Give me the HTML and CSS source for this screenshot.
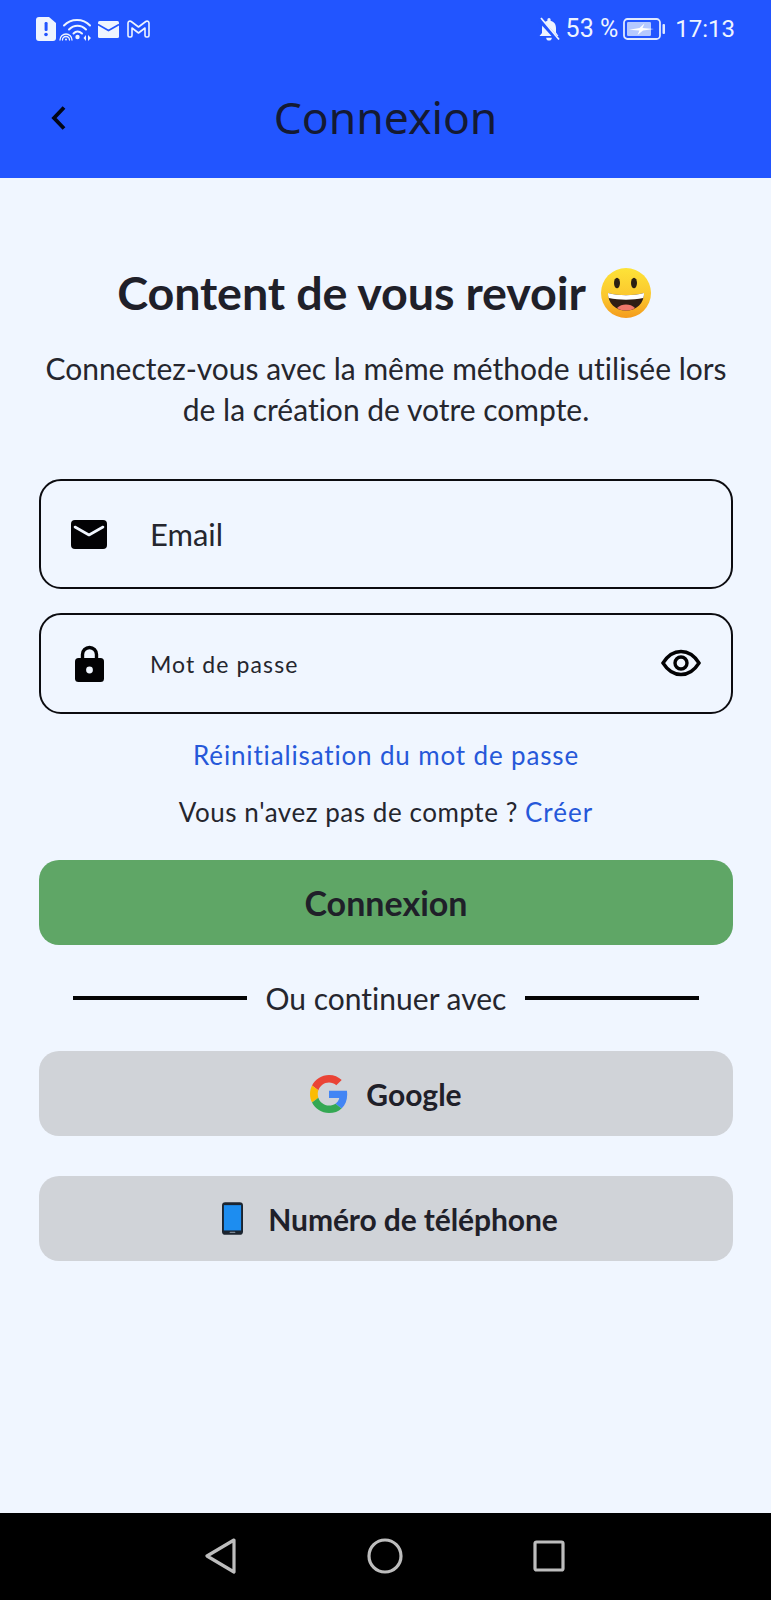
FILE: index.html
```html
<!DOCTYPE html>
<html lang="fr">
<head>
<meta charset="utf-8">
<title>Connexion</title>
<link rel="stylesheet" href="styles.css">
</head>
<body>
<div class="app">
  <header class="top">
    <div class="status">
      <div class="status-left">
        <svg class="i-sim" viewBox="0 0 20 24"><path d="M3 0h10l7 6v15a3 3 0 0 1-3 3H3a3 3 0 0 1-3-3V3a3 3 0 0 1 3-3z" fill="#eef4ff"/><rect x="8.600" y="5" width="3" height="9" rx="1.200" fill="#2255ff"/><circle cx="10" cy="17.500" r="1.800" fill="#2255ff"/></svg>
        <svg class="i-wifi" viewBox="0 0 33 24" fill="none" stroke="#eef4ff" stroke-linecap="round"><path d="M5 8.500C12 1 24 1 31 8.500" stroke-width="2"/><path d="M10 12.500C15 7.500 22 7.500 27 12.500" stroke-width="2"/><path d="M14.500 16.500C17 14 20 14 23 16.500" stroke-width="2"/><circle cx="18.500" cy="20" r="2.200" fill="#eef4ff" stroke="none"/><path d="M1 23a6 6 0 0 1 12 0" stroke-width="1.300"/><path d="M3.500 23a3.500 3.500 0 0 1 7 0" stroke-width="1.300"/><circle cx="7" cy="22.500" r="1" fill="#eef4ff" stroke="none"/><path d="M27 18l-2.500 3 2.500 3zM29 18l3 3-3 3z" fill="#eef4ff" stroke="none"/></svg>
        <svg class="i-mail" viewBox="0 0 21 17"><rect width="21" height="17" rx="1.500" fill="#eef4ff"/><path d="M0 3.500l10.500 6 10.500-6" fill="none" stroke="#2255ff" stroke-width="1.600"/></svg>
        <svg class="i-m" viewBox="0 0 23 18" fill="none" stroke="#eef4ff" stroke-width="1.600" stroke-linejoin="round"><path d="M1 3a2 2 0 0 1 3.200-1.500L11.500 7l7.300-5.500A2 2 0 0 1 22 3v12.500a1.500 1.500 0 0 1-1.500 1.500h-1a1.500 1.500 0 0 1-1.500-1.500V8l-6.500 5L5 8v7.500A1.500 1.500 0 0 1 3.500 17h-1A1.500 1.500 0 0 1 1 15.500z"/></svg>
      </div>
      <div class="status-right">
        <svg class="i-bell" viewBox="0 0 22 24"><path d="M11 1a1.600 1.600 0 0 1 1.600 1.600v1.100c3.400.8 5.400 3.700 5.400 7.300v4.500l2.500 3.500H1.500L4 16v-4.500C4 7.700 6.200 4.600 9.400 3.700V2.600A1.600 1.600 0 0 1 11 1z" fill="#eef4ff"/><path d="M8.200 20.800h5.600a2.800 2.800 0 0 1-5.600 0z" fill="#eef4ff"/><path d="M1.500 2.500l18 20" stroke="#2255ff" stroke-width="4.200"/><path d="M3 1l18 21.500" stroke="#eef4ff" stroke-width="1.800"/></svg>
        <span class="pct">53 %</span>
        <svg class="i-batt" viewBox="0 0 42 22"><rect x="1" y="1" width="36" height="20" rx="3.500" fill="none" stroke="#dfe9ff" stroke-width="1.800"/><rect x="4" y="4" width="24" height="14" rx="1.200" fill="#b5c9ff"/><path d="M6 11.800l10.500-1.800 5-4.500-2 4.500 11.500 1-11 1.600-5.500 4.400 2-4.400z" fill="#fff"/><rect x="39.500" y="6" width="2.500" height="10" rx="1" fill="#dfe9ff"/></svg>
        <span class="time">17:13</span>
      </div>
    </div>
    <div class="bar">
      <svg class="back" viewBox="0 0 18 26" fill="none" stroke="#020617" stroke-width="3.800"><path d="M14 2.500L4 13l10 10.500"/></svg>
      <h1 class="bar-title">Connexion</h1>
    </div>
  </header>

  <main class="content">
    <h2 class="welcome">Content de vous revoir
      <svg class="emoji" viewBox="0 0 50 50">
        <defs><linearGradient id="face" x1="0" y1="0" x2="0" y2="1"><stop offset="0" stop-color="#fde338"/><stop offset=".6" stop-color="#fbc52d"/><stop offset="1" stop-color="#f49a1c"/></linearGradient></defs>
        <circle cx="25" cy="25" r="25" fill="url(#face)"/>
        <ellipse cx="16" cy="15" rx="3" ry="5.200" fill="#2b2012"/>
        <ellipse cx="33" cy="15" rx="3" ry="5.200" fill="#2b2012"/>
        <path d="M7 25c11 3 25 3 36 0 0 10-7 17.500-18 17.500S7 35 7 25z" fill="#2f1d14"/>
        <path d="M7 25c11 3 25 3 36 0 0 2-.2 3.500-.7 5-11 2.200-23.600 2.200-34.600 0-.5-1.500-.7-3-.7-5z" fill="#fff"/>
        <path d="M16 40c2.500-2.500 5.500-3.500 9-3.500s6.500 1 9 3.500c-2.500 1.800-5.500 2.500-9 2.500s-6.500-.7-9-2.500z" fill="#f0776b"/>
      </svg>
    </h2>
    <p class="lead">Connectez-vous avec la même méthode utilisée lors<br>de la création de votre compte.</p>

    <div class="field field-email">
      <svg class="f-icon" viewBox="0 0 36 29"><rect width="36" height="29" rx="4" fill="#020204"/><path d="M4 7l14 8 14-8" fill="none" stroke="#f0f6ff" stroke-width="2.600" stroke-linecap="round" stroke-linejoin="round"/></svg>
      <span class="f-text f-email">Email</span>
    </div>
    <div class="field field-pass">
      <svg class="f-icon f-lock" viewBox="0 0 29 37"><path d="M7.500 15V9.500a7 7 0 0 1 14 0V15" fill="none" stroke="#020204" stroke-width="3.400"/><rect y="13" width="29" height="24" rx="3.500" fill="#020204"/><circle cx="14.500" cy="25" r="3.400" fill="#f0f6ff"/></svg>
      <span class="f-text f-pass">Mot de passe</span>
      <svg class="eye" viewBox="0 0 40 28" fill="none" stroke="#020204" stroke-width="3.400"><path d="M2 14C7 6 13 2.500 20 2.500S33 6 38 14c-5 8-11 11.500-18 11.500S7 22 2 14z"/><circle cx="20" cy="14" r="6"/></svg>
    </div>

    <a class="reset">Réinitialisation du mot de passe</a>
    <p class="signup">Vous n'avez pas de compte ? <a class="create">Créer</a></p>

    <button class="btn btn-primary">Connexion</button>

    <div class="divider"><span class="rule"></span><span class="divider-text">Ou continuer avec</span><span class="rule"></span></div>

    <button class="btn btn-alt">
      <svg class="b-icon" viewBox="0 0 48 48"><path fill="#EA4335" d="M24 9.500c3.540 0 6.710 1.220 9.210 3.600l6.850-6.850C35.900 2.380 30.470 0 24 0 14.620 0 6.510 5.380 2.560 13.220l7.980 6.190C12.430 13.720 17.740 9.500 24 9.500z"/><path fill="#4285F4" d="M46.980 24.550c0-1.570-.15-3.090-.38-4.550H24v9.020h12.940c-.58 2.960-2.260 5.480-4.780 7.180l7.730 6c4.510-4.180 7.090-10.360 7.090-17.650z"/><path fill="#FBBC05" d="M10.530 28.590c-.48-1.450-.76-2.990-.76-4.590s.27-3.140.76-4.590l-7.980-6.190C.92 16.460 0 20.120 0 24c0 3.880.92 7.540 2.560 10.780l7.970-6.190z"/><path fill="#34A853" d="M24 48c6.480 0 11.930-2.130 15.890-5.810l-7.730-6c-2.150 1.450-4.920 2.300-8.160 2.300-6.260 0-11.570-4.220-13.470-9.910l-7.980 6.190C6.510 42.620 14.620 48 24 48z"/></svg>
      <span>Google</span>
    </button>
    <button class="btn btn-alt btn-phone">
      <svg class="p-icon" viewBox="0 0 22 34"><rect width="22" height="34" rx="3.500" fill="#1c2530"/><rect x="2" y="3" width="18" height="26.500" fill="#1d8df0"/><rect x="8" y="30.800" width="6" height="1.500" rx=".7" fill="#7c8794"/></svg>
      <span>Numéro de téléphone</span>
    </button>
  </main>

  <nav class="sysnav">
    <svg class="n-back" viewBox="0 0 32 36" fill="none" stroke="#bdbdbd" stroke-width="3.200" stroke-linejoin="round"><path d="M29 2L2 18l27 16z"/></svg>
    <svg class="n-home" viewBox="0 0 36 36" fill="none" stroke="#bdbdbd" stroke-width="3.200"><circle cx="18" cy="18" r="16"/></svg>
    <svg class="n-square" viewBox="0 0 32 32" fill="none" stroke="#bdbdbd" stroke-width="3.200" stroke-linejoin="round"><rect x="2" y="2" width="28" height="28" rx="1.500"/></svg>
  </nav>
</div>
</body>
</html>
```
FILE: styles.css
```css
* { box-sizing: border-box; }
html, body { margin: 0; padding: 0; }
body { background: #f0f6ff; font-family: "Lato", sans-serif; color: #1f2029; font-variant-ligatures: none; }
.app { width: 771px; height: 1600px; display: flex; flex-direction: column; }

.top { height: 178px; background: #2255ff; flex: none; }
.status { height: 58px; display: flex; justify-content: space-between; align-items: center; padding: 0 36px 0 36px; }
.status-left, .status-right { display: flex; align-items: center; }
.status-left { gap: 3px; }
.i-sim { width: 20px; height: 24px; }
.i-wifi { width: 33px; height: 24px; }
.i-mail { width: 21px; height: 17px; margin-left: 3px; }
.i-m { width: 23px; height: 18px; margin-left: 5px; }
.status-right { color: #eef4ff; font-family: "Roboto", sans-serif; font-size: 24px; line-height: 28px; }
.pct { font-size: 25px; }
.i-bell { width: 22px; height: 24px; margin-right: 6px; }
.i-batt { width: 42px; height: 22px; margin: 0 10px 0 5px; }

.bar { height: 120px; display: flex; align-items: center; justify-content: center; position: relative; padding-bottom: 3px; }
.back { position: absolute; left: 50px; top: 47px; width: 18px; height: 26px; }
.bar-title { margin: 0; font-family: "Noto Sans", sans-serif; font-weight: 400; font-size: 44.500px; line-height: 56px; color: #141a33; }

.content { flex: 1; padding: 85px 38px 0 39px; display: flex; flex-direction: column; align-items: center; }
.welcome { margin: 0 4px 0 0; font-size: 46.700px; line-height: 58px; font-weight: 700; letter-spacing: -.15px; color: #1f2029; display: flex; align-items: center; gap: 15px; height: 58px; }
.emoji { width: 50px; height: 50px; margin-top: 2px; }
.lead { margin: 27px 0 0; font-size: 30px; line-height: 41px; text-align: center; color: #25262e; white-space: nowrap; }

.field { width: 694px; border: 2.500px solid #0c0c10; border-radius: 22px; display: flex; align-items: center; padding-left: 30px; position: relative; }
.field-email { height: 110px; margin-top: 49px; }
.field-pass { height: 101px; margin-top: 24px; }
.f-icon { width: 36px; height: 29px; flex: none; }
.f-lock { width: 29px; height: 37px; margin-left: 4px; margin-right: 3px; }
.f-text { margin-left: 43px; color: #25262e; }
.f-email { font-size: 31px; }
.f-pass { font-size: 23px; letter-spacing: 1.100px; }
.eye { position: absolute; right: 30px; top: 34px; width: 40px; height: 28px; }

.reset { margin-top: 25px; font-size: 26px; line-height: 32px; letter-spacing: .85px; color: #2658d9; }
.signup { margin: 25px 0 0; font-size: 26px; line-height: 32px; letter-spacing: .55px; color: #25262e; }
.create { color: #2658d9; letter-spacing: 1px; }

.btn { width: 694px; height: 85px; border: 0; border-radius: 20px; font-family: "Lato", sans-serif; color: #1f2029; display: flex; align-items: center; justify-content: center; padding: 0; font-variant-ligatures: none; }
.btn-primary { margin-top: 32px; background: #5fa666; font-size: 34px; font-weight: 700; }
.divider { width: 626px; margin-top: 35px; height: 36px; display: flex; align-items: center; justify-content: space-between; }
.rule { width: 174px; height: 4px; background: #050505; }
.divider-text { font-size: 30px; line-height: 36px; color: #25262e; }
.btn-alt { background: #d0d3d8; font-size: 30px; font-weight: 700; margin-top: 35px; gap: 18px; }
.btn-phone { margin-top: 40px; gap: 25px; letter-spacing: -.1px; padding-left: 8px; }
.b-icon { width: 38px; height: 38px; }
.p-icon { width: 21px; height: 33px; }

.sysnav { height: 87px; flex: none; background: #000; display: flex; align-items: center; padding-bottom: 1px; position: relative; }
.n-back { width: 32px; height: 36px; margin-left: 205px; }
.n-home { width: 36px; height: 36px; margin-left: 130px; }
.n-square { width: 32px; height: 32px; margin-left: 130px; }
```
